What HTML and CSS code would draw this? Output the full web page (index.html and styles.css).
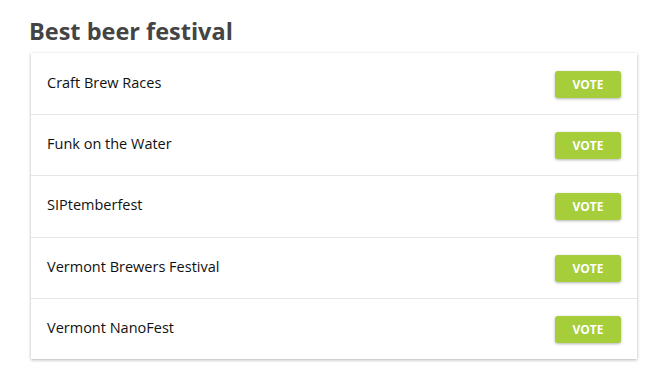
FILE: index.html
```html
<!DOCTYPE html>
<html lang="en">
<head>
    <meta charset="UTF-8">
    <title>Best beer festival</title>
    <link rel="stylesheet" href="styles.css">
</head>
<body>
    <h2 class="title">Best beer festival</h2>
    <ul class="poll">
        <li class="poll-item"><span>Craft Brew Races</span><button class="vote">VOTE</button></li>
        <li class="poll-item"><span>Funk on the Water</span><button class="vote">VOTE</button></li>
        <li class="poll-item"><span>SIPtemberfest</span><button class="vote">VOTE</button></li>
        <li class="poll-item"><span>Vermont Brewers Festival</span><button class="vote">VOTE</button></li>
        <li class="poll-item"><span>Vermont NanoFest</span><button class="vote">VOTE</button></li>
    </ul>
</body>
</html>
```
FILE: styles.css
```css
body {
    margin: 0;
    padding: 17px 28px 28px 29px;
    background: #fff;
    font-family: "Open Sans", sans-serif;
}
.title {
    margin: 0 0 8px 0;
    font-family: "Open Sans", sans-serif;
    font-weight: 700;
    font-size: 23.5px;
    line-height: 28px;
    color: #444;
}
.poll {
    list-style: none;
    margin: 0 0 0 2px;
    padding: 0;
    background: #fff;
    box-shadow: 0 1px 3px rgba(0, 0, 0, 0.3);
}
.poll-item {
    display: flex;
    align-items: center;
    justify-content: space-between;
    height: 61.2px;
    padding: 0 16px 0 16px;
    border-top: 1px solid #e6e6e6;
    box-sizing: border-box;
    font-size: 14.5px;
    color: #111;
}
.poll-item:first-child {
    border-top: none;
}
.poll-item span {
    margin-top: -3px;
}
.vote {
    width: 66px;
    height: 27px;
    margin-top: 1px;
    border: none;
    border-radius: 3px;
    background: #a6cd3a;
    color: #fff;
    font-family: "Open Sans", sans-serif;
    font-weight: 700;
    font-size: 12px;
    box-shadow: 0 1px 3px rgba(0, 0, 0, 0.3);
    cursor: pointer;
}
```
